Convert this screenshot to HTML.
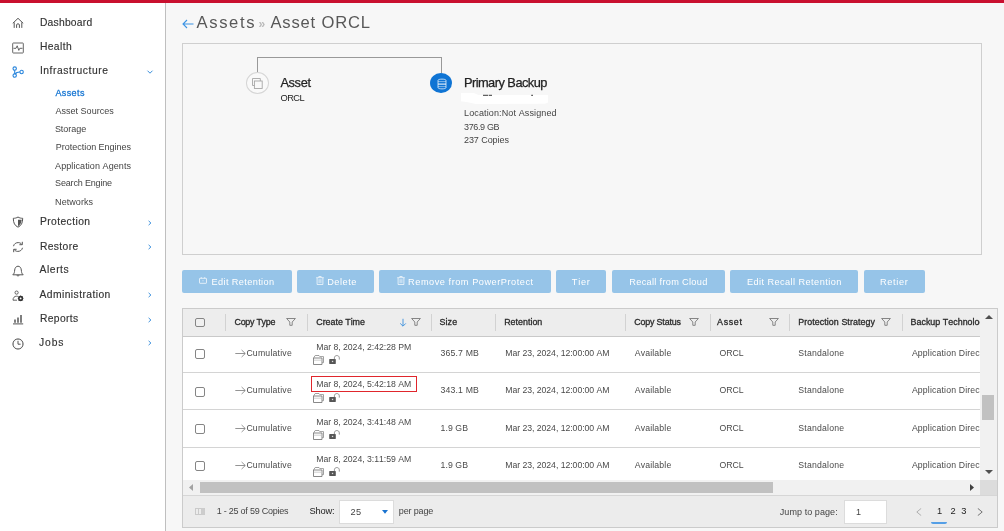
<!DOCTYPE html>
<html><head><meta charset="utf-8"><title>Assets</title>
<style>
*{box-sizing:border-box;margin:0;padding:0}
html,body{width:1004px;height:531px;overflow:hidden;background:#f7f7f7;font-family:"Liberation Sans",sans-serif;color:#333}
#wrap{position:absolute;left:0;top:0;width:1004px;height:531px;will-change:transform}
.abs{position:absolute}
.t{position:absolute;white-space:nowrap;color:#444;font-kerning:none}
#top{left:0;top:0;width:1004px;height:3px;background:#c9102f}
#side{left:0;top:3px;width:166px;height:528px;background:#fff;border-right:1px solid #bfbfbf}
.chev{position:absolute;left:146px;width:8px;height:8px}
.ico{position:absolute;overflow:visible}
#card{left:182px;top:43px;width:800px;height:212px;border:1px solid #cfcfcf;background:#f7f7f7}
.btn{position:absolute;top:270px;height:23px;background:#96c4e8;border-radius:2px}
#tbl{left:182px;top:308px;width:816px;height:220px;border:1px solid #cbcbcb;background:#fff;overflow:hidden}
.hd{position:absolute;left:0;top:0;width:797px;height:28px;background:#ededed;border-bottom:1px solid #c9c9c9;z-index:2}
.sep{position:absolute;top:4.5px;width:1px;height:17px;background:#d2d2d2}
.row{position:absolute;left:0;width:797px;border-bottom:1px solid #d4d4d4;background:#fff}
.cb{position:absolute;left:12px;width:10px;height:10px;border:1px solid #858585;border-radius:2px;background:#fff}
</style></head><body>
<div id="wrap">
<div id="top" class="abs"></div>
<div id="side" class="abs">
<svg class="ico" style="left:12px;top:14.2px" width="12" height="12" viewBox="0 0 12 12"><path d="M0.8 6.3 L6 1.3 L11.2 6.3" fill="none" stroke="#555" stroke-width="1"/><path d="M2.2 5.4 V10.9 M9.8 5.4 V10.9" fill="none" stroke="#555" stroke-width="1"/><path d="M4.6 10.9 V7.8 C4.6 6.5 7.4 6.5 7.4 7.8 V10.9" fill="none" stroke="#555" stroke-width="1"/></svg>
<div class="t" style="left:39.9px;top:13.0px;font-size:10.3px;line-height:13px;letter-spacing:0.24px;color:#333;-webkit-text-stroke:.15px #333;">Dashboard</div>
<svg class="ico" style="left:12px;top:38.6px" width="12" height="12" viewBox="0 0 12 12"><rect x="0.7" y="1" width="10.6" height="10" rx="0.6" fill="none" stroke="#555" stroke-width="0.9"/><path d="M1.5 6.3 H4 L5.2 3.8 L6.8 8.4 L7.8 6.3 H10.5" fill="none" stroke="#555" stroke-width="0.9"/></svg>
<div class="t" style="left:39.9px;top:37.0px;font-size:10.3px;line-height:13px;letter-spacing:0.39px;color:#333;-webkit-text-stroke:.15px #333;">Health</div>
<svg class="ico" style="left:12px;top:63.3px" width="12" height="12" viewBox="0 0 12 12"><circle cx="2.7" cy="2.6" r="1.7" fill="none" stroke="#2a86dc" stroke-width="1.1"/><circle cx="2.7" cy="9.6" r="1.7" fill="none" stroke="#2a86dc" stroke-width="1.1"/><circle cx="9.6" cy="6" r="1.7" fill="none" stroke="#2a86dc" stroke-width="1.1"/><path d="M2.7 4.3 V7.9 M3.4 8 C4 6.5 5.5 6 7.9 6" fill="none" stroke="#2a86dc" stroke-width="1.1"/></svg>
<div class="t" style="left:39.9px;top:61.0px;font-size:10.3px;line-height:13px;letter-spacing:0.57px;color:#333;-webkit-text-stroke:.15px #333;">Infrastructure</div>
<svg class="chev" style="top:64.7px" viewBox="0 0 8 8"><path d="M1.5 2.7 L4 5.2 L6.5 2.7" fill="none" stroke="#3a8fdc" stroke-width="1"/></svg>
<svg class="ico" style="left:12px;top:213.4px" width="12" height="12" viewBox="0 0 12 12"><path d="M6 1 C4.5 2 3 2.3 1.3 2.3 C1.3 7 2.8 9.6 6 11.2 C9.2 9.6 10.7 7 10.7 2.3 C9 2.3 7.5 2 6 1 Z" fill="none" stroke="#555" stroke-width="1"/><path d="M6 3.8 H9.7 C9.5 6.8 8.4 8.8 6 10.2 Z" fill="#555"/></svg>
<div class="t" style="left:39.9px;top:212.0px;font-size:10.3px;line-height:13px;letter-spacing:0.42px;color:#333;-webkit-text-stroke:.15px #333;">Protection</div>
<svg class="chev" style="top:215.6px" viewBox="0 0 8 8"><path d="M2.6 1.9 L4.9 4 L2.6 6.1" fill="none" stroke="#3a8fdc" stroke-width="1"/></svg>
<svg class="ico" style="left:12px;top:238.2px" width="12" height="12" viewBox="0 0 12 12"><path d="M1.5 5.2 C2 2.8 4 1.6 6.2 1.6 C7.8 1.6 9 2.3 9.8 3.4 M10.5 6.8 C10 9.2 8 10.4 5.8 10.4 C4.2 10.4 3 9.7 2.2 8.6" fill="none" stroke="#555" stroke-width="1"/><path d="M10.3 0.8 V3.7 H7.4 M1.7 11.2 V8.3 H4.6" fill="none" stroke="#555" stroke-width="1"/></svg>
<div class="t" style="left:39.9px;top:237.0px;font-size:10.3px;line-height:13px;letter-spacing:0.37px;color:#333;-webkit-text-stroke:.15px #333;">Restore</div>
<svg class="chev" style="top:239.9px" viewBox="0 0 8 8"><path d="M2.6 1.9 L4.9 4 L2.6 6.1" fill="none" stroke="#3a8fdc" stroke-width="1"/></svg>
<svg class="ico" style="left:12px;top:262.4px" width="12" height="12" viewBox="0 0 12 12"><path d="M0.8 9.8 H11.2 C9.6 8.6 9.5 7 9.3 5 C9.1 2.8 7.8 1.2 6 1.2 C4.2 1.2 2.9 2.8 2.7 5 C2.5 7 2.4 8.6 0.8 9.8 Z" fill="none" stroke="#555" stroke-width="1"/><path d="M4.8 10.2 C5 11.2 7 11.2 7.2 10.2" fill="none" stroke="#555" stroke-width="1"/></svg>
<div class="t" style="left:39.6px;top:260.0px;font-size:10.3px;line-height:13px;letter-spacing:0.55px;color:#333;-webkit-text-stroke:.15px #333;">Alerts</div>
<svg class="ico" style="left:12px;top:286.5px" width="12" height="12" viewBox="0 0 12 12"><circle cx="4.6" cy="2.6" r="1.6" fill="none" stroke="#555" stroke-width="0.9"/><path d="M5 10.2 H1 C1 7.6 2.4 6.2 4.6 6.2 C5.2 6.2 5.6 6.3 6 6.5" fill="none" stroke="#555" stroke-width="0.9"/><circle cx="8.6" cy="8.4" r="1.7" fill="none" stroke="#333" stroke-width="1.7"/><path d="M8.6 5.6 V11.2 M5.8 8.4 H11.4 M6.6 6.4 L10.6 10.4 M10.6 6.4 L6.6 10.4" stroke="#333" stroke-width="0.9"/><circle cx="8.6" cy="8.4" r="0.9" fill="#fff"/></svg>
<div class="t" style="left:39.5px;top:285.0px;font-size:10.3px;line-height:13px;letter-spacing:0.43px;color:#333;-webkit-text-stroke:.15px #333;">Administration</div>
<svg class="chev" style="top:288.3px" viewBox="0 0 8 8"><path d="M2.6 1.9 L4.9 4 L2.6 6.1" fill="none" stroke="#3a8fdc" stroke-width="1"/></svg>
<svg class="ico" style="left:12px;top:309.9px" width="12" height="12" viewBox="0 0 12 12"><path d="M1 10.9 H11.2" stroke="#555" stroke-width="1"/><path d="M3 6.5 V9.8 M6 4.5 V9.8 M9 2 V9.8" stroke="#555" stroke-width="1.5"/></svg>
<div class="t" style="left:39.9px;top:309.0px;font-size:10.3px;line-height:13px;letter-spacing:0.37px;color:#333;-webkit-text-stroke:.15px #333;">Reports</div>
<svg class="chev" style="top:312.5px" viewBox="0 0 8 8"><path d="M2.6 1.9 L4.9 4 L2.6 6.1" fill="none" stroke="#3a8fdc" stroke-width="1"/></svg>
<svg class="ico" style="left:12px;top:334.9px" width="12" height="12" viewBox="0 0 12 12"><circle cx="6" cy="6" r="5.1" fill="none" stroke="#555" stroke-width="1"/><path d="M6 2.8 V6.2 H8.6" fill="none" stroke="#555" stroke-width="1"/><path d="M6 1.2 V2 M6 10 V10.8 M1.2 6 H2 M10 6 H10.8 M2.6 2.6 L3.1 3.1 M9.4 9.4 L8.9 8.9 M2.6 9.4 L3.1 8.9 M9.4 2.6 L8.9 3.1" stroke="#555" stroke-width="0.6"/></svg>
<div class="t" style="left:39.1px;top:333.0px;font-size:10.3px;line-height:13px;letter-spacing:0.88px;color:#333;-webkit-text-stroke:.15px #333;">Jobs</div>
<svg class="chev" style="top:336.4px" viewBox="0 0 8 8"><path d="M2.6 1.9 L4.9 4 L2.6 6.1" fill="none" stroke="#3a8fdc" stroke-width="1"/></svg>
<div class="t" style="left:55.4px;top:84.0px;font-size:9px;line-height:12px;letter-spacing:0.40px;color:#1776d2;-webkit-text-stroke:.3px #1776d2;">Assets</div>
<div class="t" style="left:55.4px;top:102.0px;font-size:9px;line-height:12px;letter-spacing:0.03px;color:#444;">Asset Sources</div>
<div class="t" style="left:54.9px;top:120.0px;font-size:9px;line-height:12px;letter-spacing:-0.04px;color:#444;">Storage</div>
<div class="t" style="left:55.8px;top:138.0px;font-size:9px;line-height:12px;letter-spacing:-0.02px;color:#444;">Protection Engines</div>
<div class="t" style="left:55.1px;top:157.0px;font-size:9px;line-height:12px;letter-spacing:0.08px;color:#444;">Application Agents</div>
<div class="t" style="left:55.1px;top:174.0px;font-size:9px;line-height:12px;letter-spacing:-0.17px;color:#444;">Search Engine</div>
<div class="t" style="left:55.1px;top:193.0px;font-size:9px;line-height:12px;letter-spacing:0.06px;color:#444;">Networks</div>
</div>
<svg class="abs" style="left:181.5px;top:19px" width="12" height="10" viewBox="0 0 12 10"><path d="M11.5 5 H1.2 M5 1 L1 5 L5 9" fill="none" stroke="#3d94e4" stroke-width="1.1"/></svg>
<div class="t" style="left:196.6px;top:12.0px;font-size:16.6px;line-height:21px;letter-spacing:1.62px;color:#585858;">Assets</div>
<div class="t" style="left:258.5px;top:16.0px;font-size:12px;line-height:16px;letter-spacing:0.53px;color:#bbb;font-weight:bold;">»</div>
<div class="t" style="left:270.4px;top:12.0px;font-size:16.6px;line-height:21px;letter-spacing:0.82px;color:#585858;">Asset ORCL</div>
<div id="card" class="abs">
<div class="abs" style="left:74px;top:12.5px;width:185px;height:16px;border:1px solid #999;border-bottom:none"></div>
<div class="abs" style="left:62.6px;top:28px;width:23.4px;height:22px;border:1px solid #d6d6d6;border-radius:50%;background:#f9f9f9"></div>
<svg class="abs" style="left:68.7px;top:34px" width="11" height="11" viewBox="0 0 11 11"><path d="M8.3 3 V0.5 H0.5 V7.5 H2.4" fill="none" stroke="#a6a6a6" stroke-width="0.9"/><rect x="2.4" y="3" width="7.8" height="7.5" fill="none" stroke="#a6a6a6" stroke-width="0.9"/></svg>
<div class="t" style="left:97.4px;top:30.0px;font-size:12.8px;line-height:17px;letter-spacing:-0.35px;color:#222;-webkit-text-stroke:.25px #222;">Asset</div>
<div class="t" style="left:97.6px;top:48.0px;font-size:9.3px;line-height:12px;letter-spacing:-0.60px;color:#222;">ORCL</div>
<div class="abs" style="left:247.2px;top:28.7px;width:22px;height:20.4px;border-radius:50%;background:#0f74d4"></div>
<svg class="abs" style="left:253.5px;top:33.6px" width="10" height="12" viewBox="0 0 10 12"><path d="M1 2.4 C1 0.7 9 0.7 9 2.4 V9.6 C9 11.3 1 11.3 1 9.6 Z" fill="none" stroke="#fff" stroke-width="0.9" opacity=".8"/><path d="M1 3.6 H9 M1 8.6 H9" stroke="#fff" stroke-width="0.8" opacity=".6"/><path d="M1 6.1 H9" stroke="#fff" stroke-width="1.1" opacity=".95"/></svg>
<div class="t" style="left:280.9px;top:30.0px;font-size:12.8px;line-height:17px;letter-spacing:-0.52px;color:#222;-webkit-text-stroke:.25px #222;">Primary Backup</div>
<svg class="abs" style="left:277px;top:48px" width="90" height="13" viewBox="460 92 90 13"><path d="M460.9 92.9 L474 93.1 L478.5 94.9 L548.1 95 V102.6 L545 103.7 L476 103.9 L468 102.3 L460.9 101.2 Z" fill="#fff"/><path d="M483 95.3 H488.3 M489 95.3 H492 M531.2 95.3 H533" stroke="#3a3a3a" stroke-width="1"/></svg>
<div class="t" style="left:281.1px;top:63.0px;font-size:9px;line-height:12px;letter-spacing:0.12px;">Location:Not Assigned</div>
<div class="t" style="left:281.0px;top:77.0px;font-size:9px;line-height:12px;letter-spacing:-0.35px;">376.9 GB</div>
<div class="t" style="left:281.0px;top:90.0px;font-size:9px;line-height:12px;letter-spacing:-0.07px;">237 Copies</div>
</div>
<div class="btn" style="left:182px;width:110.0px">
<svg class="abs" style="left:16.8px;top:7.2px" width="8" height="7" viewBox="0 0 8 7"><rect x="0.5" y="1.3" width="7" height="5" rx="0.5" fill="none" stroke="#fff" stroke-width="0.8" opacity=".9"/><path d="M2.3 0.2 V1.3 M5.7 0.2 V1.3" stroke="#fff" stroke-width="0.8" opacity=".9"/><circle cx="4" cy="3.8" r="0.55" fill="#fff" opacity=".8"/></svg>
<div class="t" style="left:29.6px;top:6.0px;font-size:9.2px;line-height:12px;letter-spacing:0.37px;color:#fff;">Edit Retention</div>
</div>
<div class="btn" style="left:297px;width:77.0px">
<svg class="abs" style="left:18.5px;top:6.1px" width="8" height="9" viewBox="0 0 8 9"><path d="M0.2 1.7 H7.8 M2.8 1.5 V0.5 H5.2 V1.5 M1.1 1.9 V8.5 H6.9 V1.9 M3.1 3.2 V7.2 M4.9 3.2 V7.2" fill="none" stroke="#fff" stroke-width="0.75" opacity=".95"/></svg>
<div class="t" style="left:30.2px;top:6.0px;font-size:9.2px;line-height:12px;letter-spacing:0.52px;color:#fff;">Delete</div>
</div>
<div class="btn" style="left:378.7px;width:172.0px">
<svg class="abs" style="left:18.0px;top:6.1px" width="8" height="9" viewBox="0 0 8 9"><path d="M0.2 1.7 H7.8 M2.8 1.5 V0.5 H5.2 V1.5 M1.1 1.9 V8.5 H6.9 V1.9 M3.1 3.2 V7.2 M4.9 3.2 V7.2" fill="none" stroke="#fff" stroke-width="0.75" opacity=".95"/></svg>
<div class="t" style="left:29.4px;top:6.0px;font-size:9.2px;line-height:12px;letter-spacing:0.53px;color:#fff;">Remove from PowerProtect</div>
</div>
<div class="btn" style="left:555.5px;width:50.7px">
<div class="t" style="left:16.3px;top:6.0px;font-size:9.2px;line-height:12px;letter-spacing:0.75px;color:#fff;">Tier</div>
</div>
<div class="btn" style="left:612.2px;width:112.8px">
<div class="t" style="left:17.1px;top:6.0px;font-size:9.2px;line-height:12px;letter-spacing:0.31px;color:#fff;">Recall from Cloud</div>
</div>
<div class="btn" style="left:730.3px;width:127.9px">
<div class="t" style="left:16.6px;top:6.0px;font-size:9.2px;line-height:12px;letter-spacing:0.43px;color:#fff;">Edit Recall Retention</div>
</div>
<div class="btn" style="left:863.7px;width:61.3px">
<div class="t" style="left:16.4px;top:6.0px;font-size:9.2px;line-height:12px;letter-spacing:0.65px;color:#fff;">Retier</div>
</div>
<div id="tbl" class="abs">
<div class="hd">
<div class="cb" style="top:8.7px;height:9.6px;background:#f0f0f0"></div>
<div class="sep" style="left:41.8px"></div>
<div class="sep" style="left:123.9px"></div>
<div class="sep" style="left:248.0px"></div>
<div class="sep" style="left:311.8px"></div>
<div class="sep" style="left:442.1px"></div>
<div class="sep" style="left:526.6px"></div>
<div class="sep" style="left:606.0px"></div>
<div class="sep" style="left:719.0px"></div>
<div class="t" style="left:51.5px;top:7.0px;font-size:8.9px;line-height:12px;letter-spacing:-0.25px;color:#2b2b2b;-webkit-text-stroke:.3px #2b2b2b;">Copy Type</div>
<svg class="abs" style="left:103.3px;top:8.4px" width="10" height="9" viewBox="0 0 10 9"><path d="M0.6 1.5 H9.4 L6.2 5 V8.3 H3.8 V5 Z" fill="none" stroke="#7a7a7a" stroke-width="0.9" stroke-linejoin="round"/></svg>
<div class="t" style="left:133.3px;top:7.0px;font-size:8.9px;line-height:12px;letter-spacing:-0.02px;color:#2b2b2b;-webkit-text-stroke:.3px #2b2b2b;">Create Time</div>
<svg class="abs" style="left:227.8px;top:8.4px" width="10" height="9" viewBox="0 0 10 9"><path d="M0.6 1.5 H9.4 L6.2 5 V8.3 H3.8 V5 Z" fill="none" stroke="#7a7a7a" stroke-width="0.9" stroke-linejoin="round"/></svg>
<div class="t" style="left:256.4px;top:7.0px;font-size:8.9px;line-height:12px;letter-spacing:0.16px;color:#2b2b2b;-webkit-text-stroke:.3px #2b2b2b;">Size</div>
<div class="t" style="left:321.2px;top:7.0px;font-size:8.9px;line-height:12px;letter-spacing:0.01px;color:#2b2b2b;-webkit-text-stroke:.3px #2b2b2b;">Retention</div>
<div class="t" style="left:451.2px;top:7.0px;font-size:8.9px;line-height:12px;letter-spacing:-0.16px;color:#2b2b2b;-webkit-text-stroke:.3px #2b2b2b;">Copy Status</div>
<svg class="abs" style="left:506.2px;top:8.4px" width="10" height="9" viewBox="0 0 10 9"><path d="M0.6 1.5 H9.4 L6.2 5 V8.3 H3.8 V5 Z" fill="none" stroke="#7a7a7a" stroke-width="0.9" stroke-linejoin="round"/></svg>
<div class="t" style="left:534.1px;top:7.0px;font-size:8.9px;line-height:12px;letter-spacing:0.64px;color:#2b2b2b;-webkit-text-stroke:.3px #2b2b2b;">Asset</div>
<svg class="abs" style="left:586.2px;top:8.4px" width="10" height="9" viewBox="0 0 10 9"><path d="M0.6 1.5 H9.4 L6.2 5 V8.3 H3.8 V5 Z" fill="none" stroke="#7a7a7a" stroke-width="0.9" stroke-linejoin="round"/></svg>
<div class="t" style="left:615.3px;top:7.0px;font-size:8.9px;line-height:12px;letter-spacing:0.06px;color:#2b2b2b;-webkit-text-stroke:.3px #2b2b2b;">Protection Strategy</div>
<svg class="abs" style="left:697.8px;top:8.4px" width="10" height="9" viewBox="0 0 10 9"><path d="M0.6 1.5 H9.4 L6.2 5 V8.3 H3.8 V5 Z" fill="none" stroke="#7a7a7a" stroke-width="0.9" stroke-linejoin="round"/></svg>
<div class="t" style="left:727.5px;top:7.0px;font-size:8.9px;line-height:12px;letter-spacing:0.03px;color:#2b2b2b;width:69.3px;overflow:hidden;-webkit-text-stroke:.3px #2b2b2b;">Backup Technology</div>
<svg class="abs" style="left:215.5px;top:9px" width="8" height="9" viewBox="0 0 8 9"><path d="M4 0.8 V8 M1.2 5.4 L4 8.2 L6.8 5.4" fill="none" stroke="#3a8fdc" stroke-width="0.9"/></svg>
</div>
<div class="row" style="top:27.1px;height:36.8px">
<div class="cb" style="top:13.2px"></div>
<svg class="abs" style="left:52px;top:12.8px" width="11" height="9" viewBox="0 0 11 9"><path d="M0.3 4.5 H10 M6.6 1 L10.3 4.5 L6.6 8" fill="none" stroke="#787878" stroke-width="0.8"/></svg>
<div class="t" style="left:63.4px;top:10.9px;font-size:8.7px;line-height:12px;letter-spacing:0.21px;color:#4a4a4a;">Cumulative</div>
<div class="t" style="left:133.2px;top:4.9px;font-size:8.7px;line-height:12px;letter-spacing:-0.03px;color:#4a4a4a;">Mar 8, 2024, 2:42:28 PM</div>
<svg class="abs" style="left:130px;top:19px" width="11" height="10" viewBox="0 0 11 10"><path d="M0.5 3 H9 V9.5 H0.5 Z" fill="#fff" stroke="#747474" stroke-width="0.85"/><path d="M0.5 3 L2.2 0.5 H6 L6.8 1.6 H10.5 V7.6 H9.2" fill="none" stroke="#888" stroke-width="0.8"/><path d="M0.8 5.2 H8.8" stroke="#c4c4c4" stroke-width="0.8"/></svg>
<svg class="abs" style="left:146.3px;top:19px" width="11" height="10" viewBox="0 0 11 10"><rect x="0.2" y="4" width="6.6" height="5" rx="0.4" fill="#555"/><rect x="2.9" y="5.8" width="1.3" height="1.3" fill="#ddd"/><path d="M5.4 4.2 V2.8 C5.4 -0.2 10.3 -0.2 10.3 2.8 V4.6" fill="none" stroke="#8a8a8a" stroke-width="0.9"/></svg>
<div class="t" style="left:257.5px;top:10.9px;font-size:8.7px;line-height:12px;letter-spacing:0.17px;color:#4a4a4a;">365.7 MB</div>
<div class="t" style="left:322.2px;top:10.9px;font-size:8.7px;line-height:12px;letter-spacing:-0.04px;color:#4a4a4a;">Mar 23, 2024, 12:00:00 AM</div>
<div class="t" style="left:451.7px;top:10.9px;font-size:8.7px;line-height:12px;letter-spacing:0.16px;color:#4a4a4a;">Available</div>
<div class="t" style="left:536.6px;top:10.9px;font-size:8.7px;line-height:12px;letter-spacing:-0.09px;color:#4a4a4a;">ORCL</div>
<div class="t" style="left:615.3px;top:10.9px;font-size:8.7px;line-height:12px;letter-spacing:0.21px;color:#4a4a4a;">Standalone</div>
<div class="t" style="left:728.9px;top:10.9px;font-size:8.7px;line-height:12px;letter-spacing:0.16px;color:#4a4a4a;width:67.9px;overflow:hidden;">Application Direct</div>
</div>
<div class="row" style="top:64.5px;height:36.8px">
<div class="cb" style="top:13.2px"></div>
<svg class="abs" style="left:52px;top:12.8px" width="11" height="9" viewBox="0 0 11 9"><path d="M0.3 4.5 H10 M6.6 1 L10.3 4.5 L6.6 8" fill="none" stroke="#787878" stroke-width="0.8"/></svg>
<div class="t" style="left:63.4px;top:10.5px;font-size:8.7px;line-height:12px;letter-spacing:0.21px;color:#4a4a4a;">Cumulative</div>
<div class="abs" style="left:128.3px;top:2.3px;width:105.5px;height:16px;border:1px solid #e0262c"></div>
<div class="t" style="left:133.2px;top:4.5px;font-size:8.7px;line-height:12px;letter-spacing:-0.03px;color:#4a4a4a;">Mar 8, 2024, 5:42:18 AM</div>
<svg class="abs" style="left:130px;top:19px" width="11" height="10" viewBox="0 0 11 10"><path d="M0.5 3 H9 V9.5 H0.5 Z" fill="#fff" stroke="#747474" stroke-width="0.85"/><path d="M0.5 3 L2.2 0.5 H6 L6.8 1.6 H10.5 V7.6 H9.2" fill="none" stroke="#888" stroke-width="0.8"/><path d="M0.8 5.2 H8.8" stroke="#c4c4c4" stroke-width="0.8"/></svg>
<svg class="abs" style="left:146.3px;top:19px" width="11" height="10" viewBox="0 0 11 10"><rect x="0.2" y="4" width="6.6" height="5" rx="0.4" fill="#555"/><rect x="2.9" y="5.8" width="1.3" height="1.3" fill="#ddd"/><path d="M5.4 4.2 V2.8 C5.4 -0.2 10.3 -0.2 10.3 2.8 V4.6" fill="none" stroke="#8a8a8a" stroke-width="0.9"/></svg>
<div class="t" style="left:257.5px;top:10.5px;font-size:8.7px;line-height:12px;letter-spacing:0.17px;color:#4a4a4a;">343.1 MB</div>
<div class="t" style="left:322.2px;top:10.5px;font-size:8.7px;line-height:12px;letter-spacing:-0.04px;color:#4a4a4a;">Mar 23, 2024, 12:00:00 AM</div>
<div class="t" style="left:451.7px;top:10.5px;font-size:8.7px;line-height:12px;letter-spacing:0.16px;color:#4a4a4a;">Available</div>
<div class="t" style="left:536.6px;top:10.5px;font-size:8.7px;line-height:12px;letter-spacing:-0.09px;color:#4a4a4a;">ORCL</div>
<div class="t" style="left:615.3px;top:10.5px;font-size:8.7px;line-height:12px;letter-spacing:0.21px;color:#4a4a4a;">Standalone</div>
<div class="t" style="left:728.9px;top:10.5px;font-size:8.7px;line-height:12px;letter-spacing:0.16px;color:#4a4a4a;width:67.9px;overflow:hidden;">Application Direct</div>
</div>
<div class="row" style="top:101.9px;height:36.8px">
<div class="cb" style="top:13.2px"></div>
<svg class="abs" style="left:52px;top:12.8px" width="11" height="9" viewBox="0 0 11 9"><path d="M0.3 4.5 H10 M6.6 1 L10.3 4.5 L6.6 8" fill="none" stroke="#787878" stroke-width="0.8"/></svg>
<div class="t" style="left:63.4px;top:11.1px;font-size:8.7px;line-height:12px;letter-spacing:0.21px;color:#4a4a4a;">Cumulative</div>
<div class="t" style="left:133.2px;top:5.1px;font-size:8.7px;line-height:12px;letter-spacing:-0.03px;color:#4a4a4a;">Mar 8, 2024, 3:41:48 AM</div>
<svg class="abs" style="left:130px;top:19px" width="11" height="10" viewBox="0 0 11 10"><path d="M0.5 3 H9 V9.5 H0.5 Z" fill="#fff" stroke="#747474" stroke-width="0.85"/><path d="M0.5 3 L2.2 0.5 H6 L6.8 1.6 H10.5 V7.6 H9.2" fill="none" stroke="#888" stroke-width="0.8"/><path d="M0.8 5.2 H8.8" stroke="#c4c4c4" stroke-width="0.8"/></svg>
<svg class="abs" style="left:146.3px;top:19px" width="11" height="10" viewBox="0 0 11 10"><rect x="0.2" y="4" width="6.6" height="5" rx="0.4" fill="#555"/><rect x="2.9" y="5.8" width="1.3" height="1.3" fill="#ddd"/><path d="M5.4 4.2 V2.8 C5.4 -0.2 10.3 -0.2 10.3 2.8 V4.6" fill="none" stroke="#8a8a8a" stroke-width="0.9"/></svg>
<div class="t" style="left:257.5px;top:11.1px;font-size:8.7px;line-height:12px;letter-spacing:0.08px;color:#4a4a4a;">1.9 GB</div>
<div class="t" style="left:322.2px;top:11.1px;font-size:8.7px;line-height:12px;letter-spacing:-0.04px;color:#4a4a4a;">Mar 23, 2024, 12:00:00 AM</div>
<div class="t" style="left:451.7px;top:11.1px;font-size:8.7px;line-height:12px;letter-spacing:0.16px;color:#4a4a4a;">Available</div>
<div class="t" style="left:536.6px;top:11.1px;font-size:8.7px;line-height:12px;letter-spacing:-0.09px;color:#4a4a4a;">ORCL</div>
<div class="t" style="left:615.3px;top:11.1px;font-size:8.7px;line-height:12px;letter-spacing:0.21px;color:#4a4a4a;">Standalone</div>
<div class="t" style="left:728.9px;top:11.1px;font-size:8.7px;line-height:12px;letter-spacing:0.16px;color:#4a4a4a;width:67.9px;overflow:hidden;">Application Direct</div>
</div>
<div class="row" style="top:139.3px;height:36.8px">
<div class="cb" style="top:13.2px"></div>
<svg class="abs" style="left:52px;top:12.8px" width="11" height="9" viewBox="0 0 11 9"><path d="M0.3 4.5 H10 M6.6 1 L10.3 4.5 L6.6 8" fill="none" stroke="#787878" stroke-width="0.8"/></svg>
<div class="t" style="left:63.4px;top:10.7px;font-size:8.7px;line-height:12px;letter-spacing:0.21px;color:#4a4a4a;">Cumulative</div>
<div class="t" style="left:133.2px;top:4.7px;font-size:8.7px;line-height:12px;letter-spacing:-0.03px;color:#4a4a4a;">Mar 8, 2024, 3:11:59 AM</div>
<svg class="abs" style="left:130px;top:19px" width="11" height="10" viewBox="0 0 11 10"><path d="M0.5 3 H9 V9.5 H0.5 Z" fill="#fff" stroke="#747474" stroke-width="0.85"/><path d="M0.5 3 L2.2 0.5 H6 L6.8 1.6 H10.5 V7.6 H9.2" fill="none" stroke="#888" stroke-width="0.8"/><path d="M0.8 5.2 H8.8" stroke="#c4c4c4" stroke-width="0.8"/></svg>
<svg class="abs" style="left:146.3px;top:19px" width="11" height="10" viewBox="0 0 11 10"><rect x="0.2" y="4" width="6.6" height="5" rx="0.4" fill="#555"/><rect x="2.9" y="5.8" width="1.3" height="1.3" fill="#ddd"/><path d="M5.4 4.2 V2.8 C5.4 -0.2 10.3 -0.2 10.3 2.8 V4.6" fill="none" stroke="#8a8a8a" stroke-width="0.9"/></svg>
<div class="t" style="left:257.5px;top:10.7px;font-size:8.7px;line-height:12px;letter-spacing:0.08px;color:#4a4a4a;">1.9 GB</div>
<div class="t" style="left:322.2px;top:10.7px;font-size:8.7px;line-height:12px;letter-spacing:-0.04px;color:#4a4a4a;">Mar 23, 2024, 12:00:00 AM</div>
<div class="t" style="left:451.7px;top:10.7px;font-size:8.7px;line-height:12px;letter-spacing:0.16px;color:#4a4a4a;">Available</div>
<div class="t" style="left:536.6px;top:10.7px;font-size:8.7px;line-height:12px;letter-spacing:-0.09px;color:#4a4a4a;">ORCL</div>
<div class="t" style="left:615.3px;top:10.7px;font-size:8.7px;line-height:12px;letter-spacing:0.21px;color:#4a4a4a;">Standalone</div>
<div class="t" style="left:728.9px;top:10.7px;font-size:8.7px;line-height:12px;letter-spacing:0.16px;color:#4a4a4a;width:67.9px;overflow:hidden;">Application Direct</div>
</div>
<div class="abs" style="left:797px;top:0;width:17px;height:172px;background:#f1f1f1"></div>
<div class="abs" style="left:799px;top:86px;width:12px;height:25px;background:#c1c1c1"></div>
<svg class="abs" style="left:801.5px;top:5.800000000000011px" width="8" height="4" viewBox="0 0 8 4"><path d="M0 4 L4 0 L8 4 Z" fill="#505050"/></svg>
<svg class="abs" style="left:801.5px;top:160.8px" width="8" height="4" viewBox="0 0 8 4"><path d="M0 0 L4 4 L8 0 Z" fill="#505050"/></svg>
<div class="abs" style="left:0;top:171px;width:797px;height:16px;background:#f1f1f1"></div>
<div class="abs" style="left:797px;top:171px;width:17px;height:16px;background:#dcdcdc"></div>
<div class="abs" style="left:17px;top:173px;width:573px;height:11px;background:#c1c1c1"></div>
<svg class="abs" style="left:6px;top:175px" width="4" height="7" viewBox="0 0 4 7"><path d="M4 0 L0 3.5 L4 7 Z" fill="#a3a3a3"/></svg>
<svg class="abs" style="left:787px;top:175.2px" width="4" height="7" viewBox="0 0 4 7"><path d="M0 0 L4 3.5 L0 7 Z" fill="#404040"/></svg>
<div class="abs" style="left:0;top:186px;width:814px;height:32px;background:#ececec;border-top:1px solid #d6d6d6">
<svg class="abs" style="left:11.800000000000011px;top:11.600000000000023px" width="10" height="7" viewBox="0 0 10 7"><rect x="0.5" y="0.5" width="9" height="6" fill="none" stroke="#cacaca" stroke-width="1"/><path d="M3.5 0.5 V6.5 M6.5 0.5 V6.5" stroke="#cacaca" stroke-width="1"/><rect x="6.5" y="0.5" width="3" height="6" fill="#cdcdcd"/></svg>
<div class="t" style="left:33.7px;top:9.0px;font-size:9px;line-height:12px;letter-spacing:-0.23px;">1 - 25 of 59 Copies</div>
<div class="t" style="left:126.5px;top:9.0px;font-size:9.3px;line-height:12px;letter-spacing:-0.19px;color:#222;">Show:</div>
<div class="abs" style="left:156.3px;top:4px;width:54.5px;height:23.5px;background:#fff;border:1px solid #dcdcdc"></div>
<div class="t" style="left:167.4px;top:10.0px;font-size:9.2px;line-height:12px;letter-spacing:0.50px;">25</div>
<svg class="abs" style="left:198.7px;top:14.399999999999977px" width="6" height="4" viewBox="0 0 6 4"><path d="M0 0 H6 L3 3.8 Z" fill="#1a73d0"/></svg>
<div class="t" style="left:215.8px;top:9.0px;font-size:9px;line-height:12px;letter-spacing:-0.15px;">per page</div>
<div class="t" style="left:596.8px;top:10.0px;font-size:9px;line-height:12px;letter-spacing:0.07px;">Jump to page:</div>
<div class="abs" style="left:661px;top:4px;width:42.5px;height:23.5px;background:#fff;border:1px solid #dcdcdc"></div>
<div class="t" style="left:672.9px;top:10.0px;font-size:9px;line-height:12px;letter-spacing:-0.60px;">1</div>
<svg class="abs" style="left:733px;top:11.699999999999989px" width="6" height="8" viewBox="0 0 6 8"><path d="M5.2 0.4 L0.8 4 L5.2 7.6" fill="none" stroke="#a8a8a8" stroke-width="0.9"/></svg>
<div class="t" style="left:754.0px;top:9.0px;font-size:9.3px;line-height:12px;letter-spacing:-0.60px;color:#222;">1</div>
<div class="t" style="left:767.5px;top:9.0px;font-size:9.3px;line-height:12px;letter-spacing:0.83px;color:#222;">2</div>
<div class="t" style="left:778.3px;top:9.0px;font-size:9.3px;line-height:12px;letter-spacing:0.53px;color:#222;">3</div>
<div class="abs" style="left:748.2px;top:25.799999999999955px;width:15.8px;height:1.8px;background:#559fe6;border-radius:0 0 2px 2px"></div>
<svg class="abs" style="left:794.3px;top:11.699999999999989px" width="6" height="8" viewBox="0 0 6 8"><path d="M0.8 0.4 L5.2 4 L0.8 7.6" fill="none" stroke="#666" stroke-width="0.9"/></svg>
</div>
</div>
</div>
</body></html>
